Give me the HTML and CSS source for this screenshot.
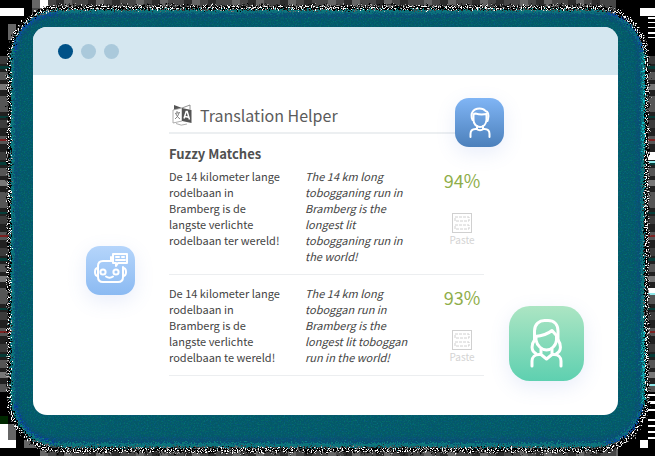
FILE: index.html
```
<!DOCTYPE html>
<html lang="en">
<head>
<meta charset="utf-8">
<meta name="viewport" content="width=device-width, initial-scale=1">
<title>Translation Helper</title>
<link rel="stylesheet" href="styles.css">
</head>
<body>
<svg class="backdrop" viewBox="0 0 655 458" preserveAspectRatio="none" aria-hidden="true">
  <defs>
    <filter id="speckle" x="0" y="0" width="655" height="458" filterUnits="userSpaceOnUse" color-interpolation-filters="sRGB">
      <feTurbulence type="fractalNoise" baseFrequency="0.8" numOctaves="2" seed="4"/>
      <feColorMatrix values="14 0 0 0 -7.3  14 0 0 0 -7.3  14 0 0 0 -7.3  0 0 0 0 1" result="dots"/>
      <feTurbulence type="fractalNoise" baseFrequency="0.35" numOctaves="2" seed="9" result="warp"/>
      <feDisplacementMap in="SourceGraphic" in2="warp" scale="9" xChannelSelector="R" yChannelSelector="G" result="ring"/>
      <feComposite in="dots" in2="ring" operator="in"/>
    </filter>
    <filter id="grain" x="0" y="0" width="655" height="458" filterUnits="userSpaceOnUse" color-interpolation-filters="sRGB">
      <feTurbulence type="fractalNoise" baseFrequency="0.7" numOctaves="2" seed="2" result="n"/>
      <feColorMatrix in="n" values="0.1 0 0 0 -0.05  0 0.3 0 0 -0.15  0 0 0.3 0 -0.15  0 0 0 0 1" result="tint"/>
      <feDisplacementMap in="SourceGraphic" in2="n" scale="9" xChannelSelector="R" yChannelSelector="G" result="body"/>
      <feComposite in="body" in2="tint" operator="arithmetic" k2="1" k3="1" result="sum"/>
      <feComposite in="sum" in2="body" operator="in"/>
    </filter>
    <pattern id="rows" width="8" height="96" patternUnits="userSpaceOnUse">
      <path fill="#202020" d="M0 0h8v96H0z"/>
      <path fill="#555" d="M0 0h8v16H0zM0 40h8v8H0zM0 72h8v8H0z"/>
      <path fill="#3b3b3b" d="M0 24h8v8H0zM0 56h8v8H0z"/>
      <path fill="#053c38" d="M0 20h8v2H0zM0 66h8v3H0z"/>
      <path fill="#7c2020" d="M0 43h8v2H0z"/>
      <path fill="#777" d="M0 84h8v6H0z"/>
    </pattern>
    <pattern id="cols" width="96" height="8" patternUnits="userSpaceOnUse">
      <path fill="#464646" d="M0 0h96v8H0z"/>
      <path fill="#666" d="M0 0h8v8H0zM40 0h8v8h-8zM64 0h8v8h-8z"/>
      <path fill="#2c2c2c" d="M16 0h8v8h-8zM56 0h8v8h-8zM88 0h8v8h-8z"/>
    </pattern>
  </defs>
  <path d="M0 0h655v456H0z"/>
  <path fill="url(#cols)" d="M32 0h584v16H32zM40 440h578v16H40z"/>
  <path fill="url(#rows)" d="M0 56h16v336H0zM640 56h15v336h-15z"/>
  <path fill="#fff" d="M0 8h24v8H0zM40 0h8v8h-8zM640 8h15v8h-15zM0 424h16v24H0zM640 440h8v8h-8zM0 456h655v2H0z"/>
  <path fill="#666" d="M32 0h8v8h-8zM8 24h8v16H8zM8 424h8v16H8zM24 440h16v8H24z"/>
  <path fill="#002800" d="M0 416h8v8H0z"/>
  <path fill="#fff" d="M648 17h7v2h-7zM648 22h7v1h-7zM648 27h7v1h-7zM648 32h7v2h-7zM648 37h7v1h-7zM648 152h7v8h-7zM648 288h7v5h-7zM648 394h7v2h-7zM648 401h7v3h-7zM648 409h7v2h-7zM648 419h7v2h-7zM648 425h7v2h-7zM648 431h7v2h-7zM648 437h7v2h-7z"/>
  <path fill="#8fe8ea" d="M648 161h7v2h-7zM648 293h7v2h-7zM648 384h7v2h-7z"/>
  <rect x="10" y="8" width="636" height="442" rx="50" fill="none" stroke="#fff" stroke-width="5" filter="url(#speckle)"/>
  <g filter="url(#grain)">
    <rect x="11" y="10" width="633" height="437" rx="49" fill="#0b7078"/>
    <rect x="14" y="13" width="627" height="430" rx="46" fill="#07506f"/>
    <rect x="19" y="18" width="617" height="419" rx="38" fill="#035868"/>
    <path fill="none" stroke="#0a35a8" stroke-width="2" opacity=".7" d="M15 50Q19 17 58 13M606 13Q638 19 642 52M15 402Q19 437 58 443M606 443Q638 437 642 404"/>
    <path fill="none" stroke="#10cdd5" stroke-width="2" opacity=".7" d="M644 52v100M644 330v76"/>
  </g>
</svg>

<main class="window">
  <header class="titlebar">
    <span class="dot dot-active"></span><span class="dot"></span><span class="dot"></span>
  </header>
  <div class="content">
    <section class="helper">
      <div class="helper-head">
        <svg class="translate-icon" viewBox="0 0 22 22" aria-hidden="true">
          <path d="M3 1l8 3-8 2z" fill="#555"/>
          <path d="M11 4l8-3v4.500" fill="none" stroke="#777" stroke-width=".8"/>
          <path d="M2 6l9-2v13l-9 2z" fill="#fff" stroke="#999" stroke-width=".8"/>
          <path d="M11 4l9.500 2v13L11 17z" fill="#555"/>
          <path d="M4 9.500l5-1M6 7v2M8 9q-1 4-4 6M5 10q1 3 4 5" fill="none" stroke="#777" stroke-width=".9"/>
          <path d="M13 14.500l2.200-7h1l2.300 8M14 12.500l3.500.7" fill="none" stroke="#fff" stroke-width="1.500"/>
          <path d="M5 19.500q5 3 11 .5" fill="none" stroke="#999" stroke-width=".8"/>
        </svg>
        <h1>Translation Helper</h1>
      </div>
      <h2 id="matches">Fuzzy Matches</h2>
      <table aria-labelledby="matches">
        <colgroup><col class="col-source"><col><col class="col-score"></colgroup>
        <tbody>
          <tr>
            <td lang="nl">De 14 kilometer lange<br>rodelbaan in<br>Bramberg is de<br>langste verlichte<br>rodelbaan ter wereld!</td>
            <td class="target">The 14 km long<br>tobogganing run in<br>Bramberg is the<br>longest lit<br>tobogganing run in<br>the world!</td>
            <td class="action">
              <span class="score">94%</span>
              <button type="button" class="paste">
                <svg viewBox="0 0 20 20" aria-hidden="true"><rect x=".5" y=".5" width="19" height="19"/><rect x="3" y="4" width="14" height="4" stroke-dasharray="3 1"/><rect x="3" y="12" width="14" height="4" stroke-dasharray="3 1"/></svg>
                Paste
              </button>
            </td>
          </tr>
          <tr>
            <td lang="nl">De 14 kilometer lange<br>rodelbaan in<br>Bramberg is de<br>langste verlichte<br>rodelbaan te wereld!</td>
            <td class="target">The 14 km long<br>toboggan run in<br>Bramberg is the<br>longest lit toboggan<br>run in the world!</td>
            <td class="action">
              <span class="score">93%</span>
              <button type="button" class="paste">
                <svg viewBox="0 0 20 20" aria-hidden="true"><rect x=".5" y=".5" width="19" height="19"/><rect x="3" y="4" width="14" height="4" stroke-dasharray="3 1"/><rect x="3" y="12" width="14" height="4" stroke-dasharray="3 1"/></svg>
                Paste
              </button>
            </td>
          </tr>
        </tbody>
      </table>
      <div class="badge badge-man">
        <svg viewBox="0 0 49 49" aria-hidden="true">
          <path d="M17.500 22q-2-5 0-8 2-3.500 7-3.500 4 0 6 2.500 4 1 2.500 8l-.5 2"/>
          <path d="M18.500 17q0-1.500 2-1.500 5 1.500 11 .5M18.500 17v5c0 4 3 7 6.500 7s6-3 6.500-7v-6"/>
          <path d="M15.500 39v-3q0-5 5-5h1q3.500 2.500 7 0h1q5 0 5 5v3M22 31v-3M28 31v-3"/>
        </svg>
      </div>
    </section>
    <div class="badge badge-robot">
      <svg viewBox="0 0 49 49" aria-hidden="true">
        <path d="M26 15H17q-5 0-5 5v11q0 5 5 5h15q5 0 5-5V21M25 15v-4"/>
        <path d="M12 22q-3 0-3 4t3 4M37 22q3 0 3 4t-3 4"/>
        <circle cx="17" cy="26" r="2.600"/><circle cx="30" cy="26" r="2.600"/>
        <path d="M20 30.500q3.500 2.500 7 0"/>
        <path d="M27 8h14v9h-9l-2 3v-3h-3zM30 11h3M36 11h2M30 14h9"/>
      </svg>
    </div>
    <div class="badge badge-woman">
      <svg viewBox="0 0 75 75" aria-hidden="true">
        <path d="M25.500 34V25c0-7 5-10.500 10-10.500h3.500c6 0 10 4 10 10.500v9"/>
        <path d="M25.500 34c-3 4-4 11 1.500 13.500M49 34c3 4 4 11-1.500 13.500"/>
        <path d="M26 30.500q11-1 17-6l4 4.500M27 31v3c1 6 6 10 10.500 10S47 40 47.500 34v-5"/>
        <path d="M23 60v-5c0-4 3-6.500 7-6.500h2l5.500 4.500 5.500-4.500h2c4 0 7 2.500 7 6.500v5M32 48.500V43M43 48.500V43"/>
      </svg>
    </div>
  </div>
</main>
</body>
</html>
```
FILE: styles.css
```
* { box-sizing: border-box; }

body {
  margin: 0;
  min-height: 100vh;
  display: flex;
  padding: 27px 37px 43px 33px;
  position: relative;
  color: #444;
  font-family: "Noto Sans CJK SC", "Noto Sans", sans-serif;
  font-size: 11px;
  line-height: 16px;
}

.backdrop {
  position: absolute;
  inset: 0;
  width: 100%;
  height: 100%;
  z-index: -1;
}

.window {
  flex: 1;
  display: flex;
  flex-direction: column;
  background: #fff;
  border-radius: 14px;
  overflow: hidden;
}

.titlebar {
  display: flex;
  align-items: center;
  gap: 8px;
  height: 48px;
  padding: 0 25px;
  background: #d5e7f0;
}

.dot {
  width: 15px;
  height: 15px;
  border-radius: 50%;
  background: #aac9db;
}

.dot-active { background: #005288; }

.content {
  flex: 1;
  position: relative;
  padding: 23px 134px 0 136px;
}

.helper { position: relative; }

.helper-head {
  display: flex;
  align-items: center;
  gap: 7px;
  height: 36px;
  padding-left: 2px;
  border-bottom: 2px solid #eceff1;
}

.translate-icon {
  width: 22px;
  height: 22px;
}

h1 {
  margin: 0;
  color: #5b5b5b;
  font-size: 16px;
  font-weight: 400;
  line-height: 24px;
}

h2 {
  margin: 12px 0 0;
  color: #505050;
  font-size: 13px;
  font-weight: 700;
  line-height: 16px;
}

table {
  width: 100%;
  table-layout: fixed;
  border-collapse: collapse;
}

.col-source { width: 136px; }
.col-score { width: 44px; }

td {
  padding: 10px 0;
  vertical-align: top;
  white-space: nowrap;
}

tr:first-child td { padding-top: 6px; }
tr { border-bottom: 1px solid #eceef0; }

.target { font-style: italic; }

.action { text-align: center; }

.score {
  display: block;
  margin-bottom: 20px;
  color: #8fae4a;
  font-size: 18px;
  line-height: 25px;
}

.paste {
  display: flex;
  flex-direction: column;
  align-items: center;
  width: 100%;
  padding: 0;
  border: 0;
  background: none;
  color: #d4d4d4;
  font: inherit;
  font-size: 10px;
  line-height: 14px;
}

.paste svg {
  width: 20px;
  height: 20px;
  fill: none;
  stroke: #d0d0d0;
}

.badge {
  position: absolute;
  width: 49px;
  height: 49px;
  border-radius: 14px;
  box-shadow: 0 6px 20px rgba(90, 130, 220, 0.14);
}

.badge svg {
  display: block;
  width: 100%;
  height: 100%;
  fill: none;
  stroke: #fff;
  stroke-width: 2;
  stroke-linecap: round;
  stroke-linejoin: round;
}

.badge-man {
  top: 0;
  right: -20px;
  background: linear-gradient(#80b5f5, #4c80bb);
}

.badge-robot {
  top: 171px;
  left: 9%;
  background: linear-gradient(#b5d5fb, #8bbaf2);
}

.badge-woman {
  right: 34px;
  bottom: 34px;
  width: 75px;
  height: 75px;
  border-radius: 21px;
  background: linear-gradient(#ace5c3, #5ed0b0);
}

.badge-woman svg { stroke-width: 3; }
```
